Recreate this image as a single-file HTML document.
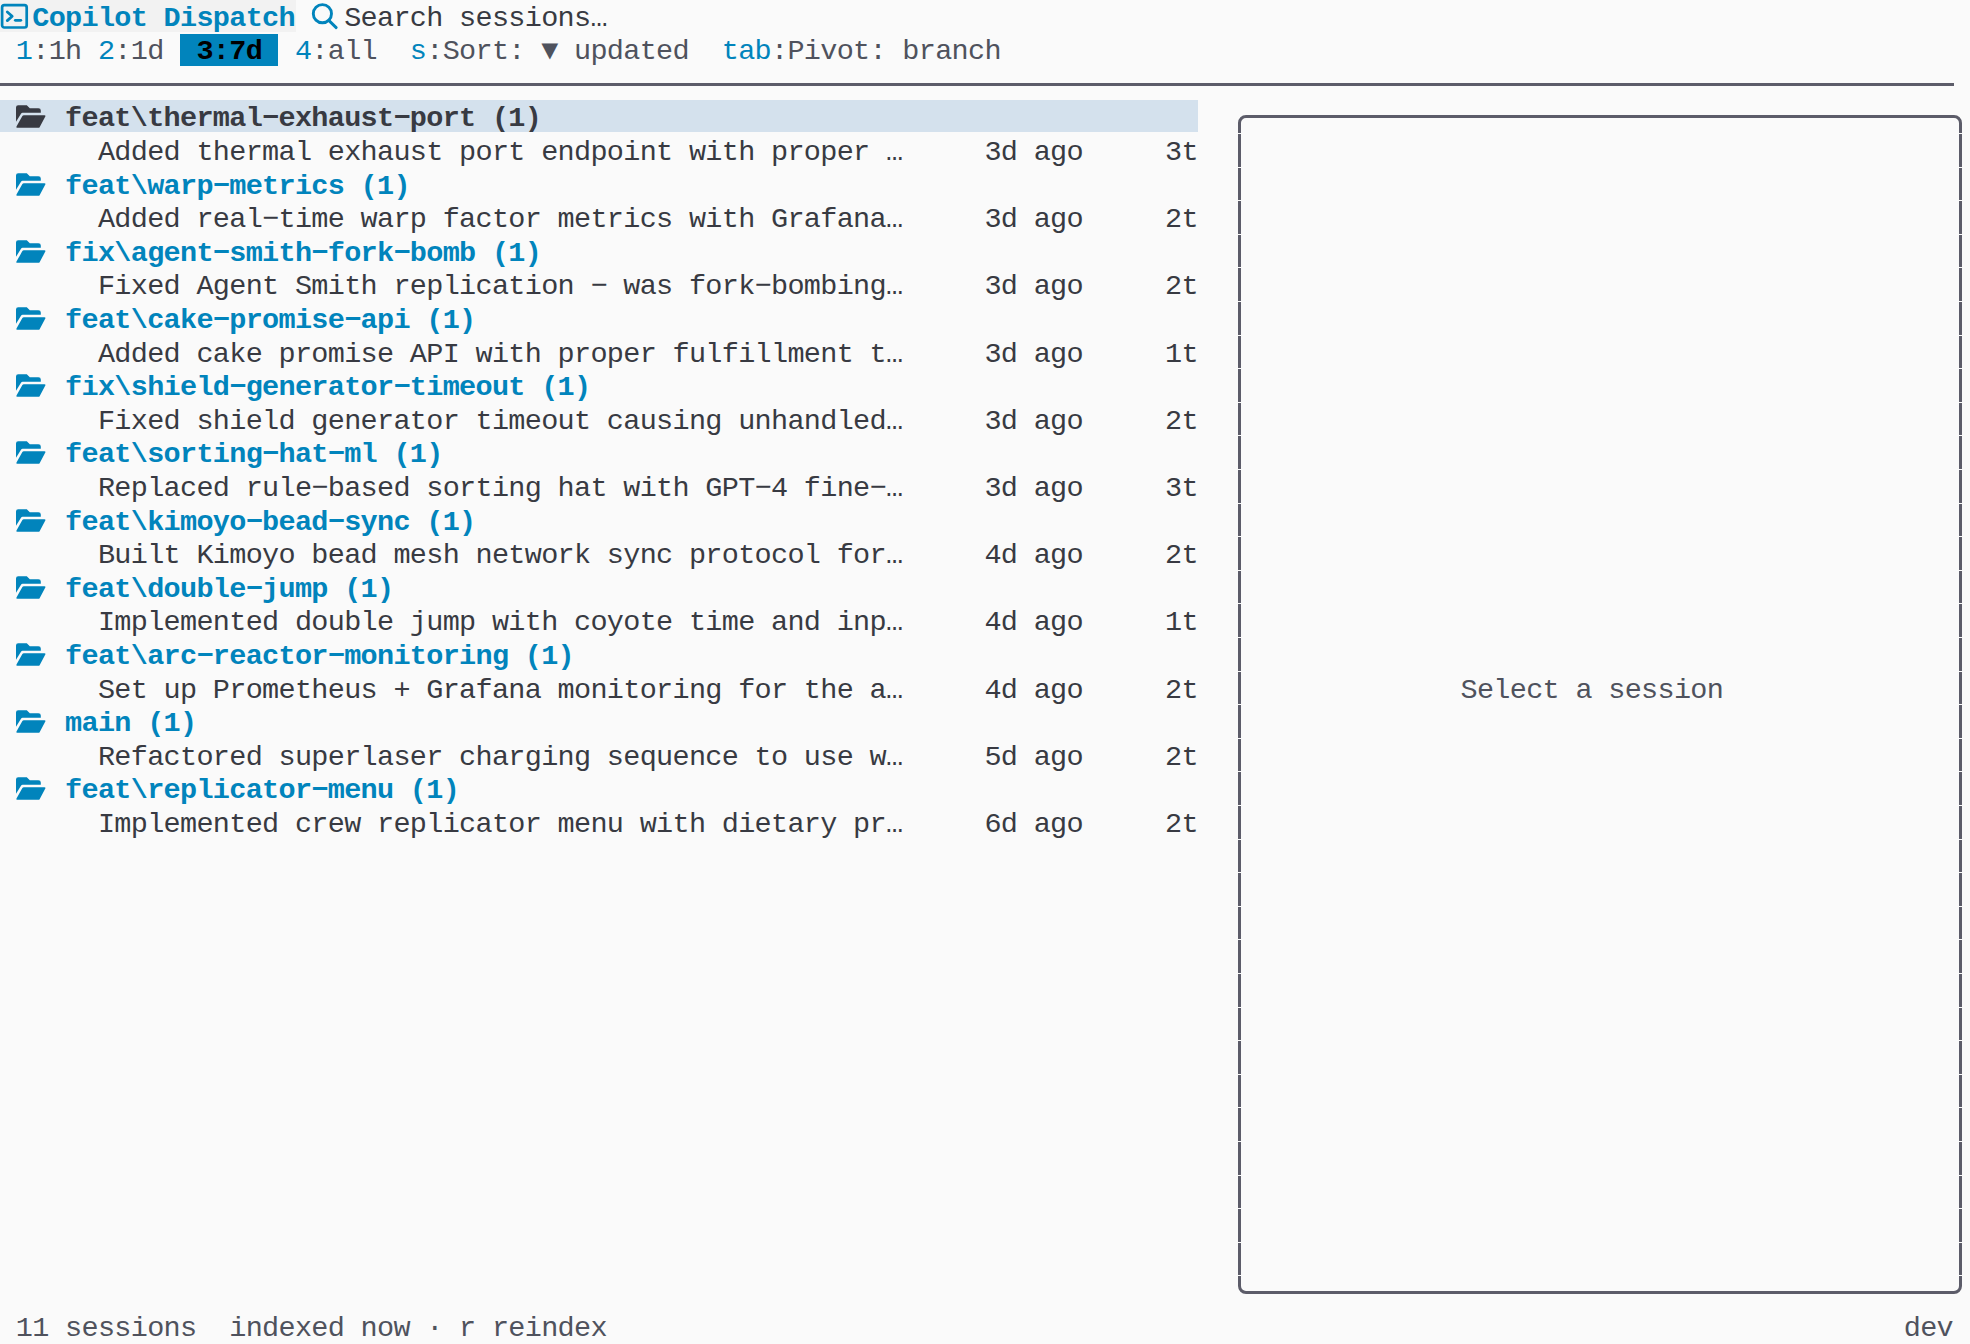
<!DOCTYPE html>
<html><head><meta charset="utf-8"><style>
html,body{margin:0;padding:0;}
body{width:1970px;height:1344px;overflow:hidden;background:#fafafa;position:relative;}
.t{position:absolute;white-space:pre;font-family:"Liberation Mono",monospace;font-size:28.5px;line-height:33.6px;height:33.6px;letter-spacing:-0.6861px;}
.r{position:absolute;}
</style></head><body>
<div class="r" style="left:0px;top:0px;width:296px;height:32px;background:#f2f2f2;"></div>
<svg class="r" style="left:0;top:0" width="34" height="34" viewBox="0 0 34 34">
<rect x="2.1" y="5.2" width="24.6" height="22.3" rx="2.2" fill="none" stroke="#0184bc" stroke-width="2.7"/>
<polyline points="7.3,12 12.2,16.2 7.3,20.6" fill="none" stroke="#0184bc" stroke-width="2.8" stroke-linecap="round" stroke-linejoin="round"/>
<line x1="15.3" y1="20.3" x2="20.8" y2="20.3" stroke="#0184bc" stroke-width="2.8" stroke-linecap="round"/>
</svg>
<div class="t" style="left:32.233px;top:1.50px;color:#0184bc;font-weight:bold;">Copilot Dispatch</div>
<svg class="r" style="left:300px;top:0" width="44" height="34" viewBox="300 0 44 34">
<circle cx="322.4" cy="13.7" r="9.1" fill="none" stroke="#0184bc" stroke-width="2.9"/>
<line x1="329" y1="20.6" x2="336.2" y2="27.6" stroke="#0184bc" stroke-width="2.9" stroke-linecap="round"/>
</svg>
<div class="t" style="left:344.150px;top:1.50px;color:#383a42;">Search sessions…</div>
<div class="r" style="left:180px;top:34px;width:98px;height:32px;background:#0184bc;"></div>
<div class="t" style="left:15.817px;top:35.10px;color:#0184bc;">1</div>
<div class="t" style="left:32.233px;top:35.10px;color:#4f525d;">:1h</div>
<div class="t" style="left:97.900px;top:35.10px;color:#0184bc;">2</div>
<div class="t" style="left:114.317px;top:35.10px;color:#4f525d;">:1d</div>
<div class="t" style="left:196.400px;top:35.10px;color:#000;font-weight:bold;">3:7d</div>
<div class="t" style="left:294.900px;top:35.10px;color:#0184bc;">4</div>
<div class="t" style="left:311.317px;top:35.10px;color:#4f525d;">:all</div>
<div class="t" style="left:409.817px;top:35.10px;color:#0184bc;">s</div>
<div class="t" style="left:426.233px;top:35.10px;color:#4f525d;">:Sort: ▼ updated</div>
<div class="t" style="left:721.733px;top:35.10px;color:#0184bc;">tab</div>
<div class="t" style="left:770.983px;top:35.10px;color:#4f525d;">:Pivot: branch</div>
<div class="r" style="left:0px;top:83px;width:1954px;height:3px;background:#5c5c69;"></div>
<div class="r" style="left:0px;top:100px;width:1198px;height:32px;background:#d4e1ed;"></div>
<svg class="r" style="left:0;top:101.30px" width="50" height="34" viewBox="0 0 50 34">
<path d="M16,6.4 Q16,4.2 18.2,4.2 L26.8,4.2 L29.8,7.2 L38.4,7.2 Q40.8,7.2 40.8,9.6 L40.8,11.8 L22.6,11.8 Q21.6,11.8 21,12.8 L16,20.8 Z" fill="#383a42"/>
<path d="M23.8,14.2 L44.4,14.2 Q45.9,14.2 45.3,15.6 L39.6,26.2 Q39.2,26.8 38.4,26.8 L17.2,26.8 Q15.9,26.8 16.5,25.6 L22.4,15.0 Q22.9,14.2 23.8,14.2 Z" fill="#383a42"/>
</svg>
<div class="t" style="left:65.067px;top:102.30px;color:#383a42;font-weight:bold;">feat\thermal−exhaust−port (1)</div>
<div class="t" style="left:97.900px;top:135.90px;color:#383a42;">Added thermal exhaust port endpoint with proper …</div>
<div class="t" style="left:984.400px;top:135.90px;color:#383a42;">3d ago</div>
<div class="t" style="left:1164.983px;top:135.90px;color:#383a42;">3t</div>
<svg class="r" style="left:0;top:168.50px" width="50" height="34" viewBox="0 0 50 34">
<path d="M16,6.4 Q16,4.2 18.2,4.2 L26.8,4.2 L29.8,7.2 L38.4,7.2 Q40.8,7.2 40.8,9.6 L40.8,11.8 L22.6,11.8 Q21.6,11.8 21,12.8 L16,20.8 Z" fill="#0184bc"/>
<path d="M23.8,14.2 L44.4,14.2 Q45.9,14.2 45.3,15.6 L39.6,26.2 Q39.2,26.8 38.4,26.8 L17.2,26.8 Q15.9,26.8 16.5,25.6 L22.4,15.0 Q22.9,14.2 23.8,14.2 Z" fill="#0184bc"/>
</svg>
<div class="t" style="left:65.067px;top:169.50px;color:#0184bc;font-weight:bold;">feat\warp−metrics (1)</div>
<div class="t" style="left:97.900px;top:203.10px;color:#383a42;">Added real−time warp factor metrics with Grafana…</div>
<div class="t" style="left:984.400px;top:203.10px;color:#383a42;">3d ago</div>
<div class="t" style="left:1164.983px;top:203.10px;color:#383a42;">2t</div>
<svg class="r" style="left:0;top:235.70px" width="50" height="34" viewBox="0 0 50 34">
<path d="M16,6.4 Q16,4.2 18.2,4.2 L26.8,4.2 L29.8,7.2 L38.4,7.2 Q40.8,7.2 40.8,9.6 L40.8,11.8 L22.6,11.8 Q21.6,11.8 21,12.8 L16,20.8 Z" fill="#0184bc"/>
<path d="M23.8,14.2 L44.4,14.2 Q45.9,14.2 45.3,15.6 L39.6,26.2 Q39.2,26.8 38.4,26.8 L17.2,26.8 Q15.9,26.8 16.5,25.6 L22.4,15.0 Q22.9,14.2 23.8,14.2 Z" fill="#0184bc"/>
</svg>
<div class="t" style="left:65.067px;top:236.70px;color:#0184bc;font-weight:bold;">fix\agent−smith−fork−bomb (1)</div>
<div class="t" style="left:97.900px;top:270.30px;color:#383a42;">Fixed Agent Smith replication − was fork−bombing…</div>
<div class="t" style="left:984.400px;top:270.30px;color:#383a42;">3d ago</div>
<div class="t" style="left:1164.983px;top:270.30px;color:#383a42;">2t</div>
<svg class="r" style="left:0;top:302.90px" width="50" height="34" viewBox="0 0 50 34">
<path d="M16,6.4 Q16,4.2 18.2,4.2 L26.8,4.2 L29.8,7.2 L38.4,7.2 Q40.8,7.2 40.8,9.6 L40.8,11.8 L22.6,11.8 Q21.6,11.8 21,12.8 L16,20.8 Z" fill="#0184bc"/>
<path d="M23.8,14.2 L44.4,14.2 Q45.9,14.2 45.3,15.6 L39.6,26.2 Q39.2,26.8 38.4,26.8 L17.2,26.8 Q15.9,26.8 16.5,25.6 L22.4,15.0 Q22.9,14.2 23.8,14.2 Z" fill="#0184bc"/>
</svg>
<div class="t" style="left:65.067px;top:303.90px;color:#0184bc;font-weight:bold;">feat\cake−promise−api (1)</div>
<div class="t" style="left:97.900px;top:337.50px;color:#383a42;">Added cake promise API with proper fulfillment t…</div>
<div class="t" style="left:984.400px;top:337.50px;color:#383a42;">3d ago</div>
<div class="t" style="left:1164.983px;top:337.50px;color:#383a42;">1t</div>
<svg class="r" style="left:0;top:370.10px" width="50" height="34" viewBox="0 0 50 34">
<path d="M16,6.4 Q16,4.2 18.2,4.2 L26.8,4.2 L29.8,7.2 L38.4,7.2 Q40.8,7.2 40.8,9.6 L40.8,11.8 L22.6,11.8 Q21.6,11.8 21,12.8 L16,20.8 Z" fill="#0184bc"/>
<path d="M23.8,14.2 L44.4,14.2 Q45.9,14.2 45.3,15.6 L39.6,26.2 Q39.2,26.8 38.4,26.8 L17.2,26.8 Q15.9,26.8 16.5,25.6 L22.4,15.0 Q22.9,14.2 23.8,14.2 Z" fill="#0184bc"/>
</svg>
<div class="t" style="left:65.067px;top:371.10px;color:#0184bc;font-weight:bold;">fix\shield−generator−timeout (1)</div>
<div class="t" style="left:97.900px;top:404.70px;color:#383a42;">Fixed shield generator timeout causing unhandled…</div>
<div class="t" style="left:984.400px;top:404.70px;color:#383a42;">3d ago</div>
<div class="t" style="left:1164.983px;top:404.70px;color:#383a42;">2t</div>
<svg class="r" style="left:0;top:437.30px" width="50" height="34" viewBox="0 0 50 34">
<path d="M16,6.4 Q16,4.2 18.2,4.2 L26.8,4.2 L29.8,7.2 L38.4,7.2 Q40.8,7.2 40.8,9.6 L40.8,11.8 L22.6,11.8 Q21.6,11.8 21,12.8 L16,20.8 Z" fill="#0184bc"/>
<path d="M23.8,14.2 L44.4,14.2 Q45.9,14.2 45.3,15.6 L39.6,26.2 Q39.2,26.8 38.4,26.8 L17.2,26.8 Q15.9,26.8 16.5,25.6 L22.4,15.0 Q22.9,14.2 23.8,14.2 Z" fill="#0184bc"/>
</svg>
<div class="t" style="left:65.067px;top:438.30px;color:#0184bc;font-weight:bold;">feat\sorting−hat−ml (1)</div>
<div class="t" style="left:97.900px;top:471.90px;color:#383a42;">Replaced rule−based sorting hat with GPT−4 fine−…</div>
<div class="t" style="left:984.400px;top:471.90px;color:#383a42;">3d ago</div>
<div class="t" style="left:1164.983px;top:471.90px;color:#383a42;">3t</div>
<svg class="r" style="left:0;top:504.50px" width="50" height="34" viewBox="0 0 50 34">
<path d="M16,6.4 Q16,4.2 18.2,4.2 L26.8,4.2 L29.8,7.2 L38.4,7.2 Q40.8,7.2 40.8,9.6 L40.8,11.8 L22.6,11.8 Q21.6,11.8 21,12.8 L16,20.8 Z" fill="#0184bc"/>
<path d="M23.8,14.2 L44.4,14.2 Q45.9,14.2 45.3,15.6 L39.6,26.2 Q39.2,26.8 38.4,26.8 L17.2,26.8 Q15.9,26.8 16.5,25.6 L22.4,15.0 Q22.9,14.2 23.8,14.2 Z" fill="#0184bc"/>
</svg>
<div class="t" style="left:65.067px;top:505.50px;color:#0184bc;font-weight:bold;">feat\kimoyo−bead−sync (1)</div>
<div class="t" style="left:97.900px;top:539.10px;color:#383a42;">Built Kimoyo bead mesh network sync protocol for…</div>
<div class="t" style="left:984.400px;top:539.10px;color:#383a42;">4d ago</div>
<div class="t" style="left:1164.983px;top:539.10px;color:#383a42;">2t</div>
<svg class="r" style="left:0;top:571.70px" width="50" height="34" viewBox="0 0 50 34">
<path d="M16,6.4 Q16,4.2 18.2,4.2 L26.8,4.2 L29.8,7.2 L38.4,7.2 Q40.8,7.2 40.8,9.6 L40.8,11.8 L22.6,11.8 Q21.6,11.8 21,12.8 L16,20.8 Z" fill="#0184bc"/>
<path d="M23.8,14.2 L44.4,14.2 Q45.9,14.2 45.3,15.6 L39.6,26.2 Q39.2,26.8 38.4,26.8 L17.2,26.8 Q15.9,26.8 16.5,25.6 L22.4,15.0 Q22.9,14.2 23.8,14.2 Z" fill="#0184bc"/>
</svg>
<div class="t" style="left:65.067px;top:572.70px;color:#0184bc;font-weight:bold;">feat\double−jump (1)</div>
<div class="t" style="left:97.900px;top:606.30px;color:#383a42;">Implemented double jump with coyote time and inp…</div>
<div class="t" style="left:984.400px;top:606.30px;color:#383a42;">4d ago</div>
<div class="t" style="left:1164.983px;top:606.30px;color:#383a42;">1t</div>
<svg class="r" style="left:0;top:638.90px" width="50" height="34" viewBox="0 0 50 34">
<path d="M16,6.4 Q16,4.2 18.2,4.2 L26.8,4.2 L29.8,7.2 L38.4,7.2 Q40.8,7.2 40.8,9.6 L40.8,11.8 L22.6,11.8 Q21.6,11.8 21,12.8 L16,20.8 Z" fill="#0184bc"/>
<path d="M23.8,14.2 L44.4,14.2 Q45.9,14.2 45.3,15.6 L39.6,26.2 Q39.2,26.8 38.4,26.8 L17.2,26.8 Q15.9,26.8 16.5,25.6 L22.4,15.0 Q22.9,14.2 23.8,14.2 Z" fill="#0184bc"/>
</svg>
<div class="t" style="left:65.067px;top:639.90px;color:#0184bc;font-weight:bold;">feat\arc−reactor−monitoring (1)</div>
<div class="t" style="left:97.900px;top:673.50px;color:#383a42;">Set up Prometheus + Grafana monitoring for the a…</div>
<div class="t" style="left:984.400px;top:673.50px;color:#383a42;">4d ago</div>
<div class="t" style="left:1164.983px;top:673.50px;color:#383a42;">2t</div>
<svg class="r" style="left:0;top:706.10px" width="50" height="34" viewBox="0 0 50 34">
<path d="M16,6.4 Q16,4.2 18.2,4.2 L26.8,4.2 L29.8,7.2 L38.4,7.2 Q40.8,7.2 40.8,9.6 L40.8,11.8 L22.6,11.8 Q21.6,11.8 21,12.8 L16,20.8 Z" fill="#0184bc"/>
<path d="M23.8,14.2 L44.4,14.2 Q45.9,14.2 45.3,15.6 L39.6,26.2 Q39.2,26.8 38.4,26.8 L17.2,26.8 Q15.9,26.8 16.5,25.6 L22.4,15.0 Q22.9,14.2 23.8,14.2 Z" fill="#0184bc"/>
</svg>
<div class="t" style="left:65.067px;top:707.10px;color:#0184bc;font-weight:bold;">main (1)</div>
<div class="t" style="left:97.900px;top:740.70px;color:#383a42;">Refactored superlaser charging sequence to use w…</div>
<div class="t" style="left:984.400px;top:740.70px;color:#383a42;">5d ago</div>
<div class="t" style="left:1164.983px;top:740.70px;color:#383a42;">2t</div>
<svg class="r" style="left:0;top:773.30px" width="50" height="34" viewBox="0 0 50 34">
<path d="M16,6.4 Q16,4.2 18.2,4.2 L26.8,4.2 L29.8,7.2 L38.4,7.2 Q40.8,7.2 40.8,9.6 L40.8,11.8 L22.6,11.8 Q21.6,11.8 21,12.8 L16,20.8 Z" fill="#0184bc"/>
<path d="M23.8,14.2 L44.4,14.2 Q45.9,14.2 45.3,15.6 L39.6,26.2 Q39.2,26.8 38.4,26.8 L17.2,26.8 Q15.9,26.8 16.5,25.6 L22.4,15.0 Q22.9,14.2 23.8,14.2 Z" fill="#0184bc"/>
</svg>
<div class="t" style="left:65.067px;top:774.30px;color:#0184bc;font-weight:bold;">feat\replicator−menu (1)</div>
<div class="t" style="left:97.900px;top:807.90px;color:#383a42;">Implemented crew replicator menu with dietary pr…</div>
<div class="t" style="left:984.400px;top:807.90px;color:#383a42;">6d ago</div>
<div class="t" style="left:1164.983px;top:807.90px;color:#383a42;">2t</div>
<div class="r" style="left:1237.5px;top:115px;width:724.5px;height:1179px;box-sizing:border-box;border:3px solid #5c5c69;border-radius:8px"></div>
<div class="r" style="left:1236px;top:133px;width:7px;height:1px;background:#fafafa;"></div>
<div class="r" style="left:1957px;top:133px;width:7px;height:1px;background:#fafafa;"></div>
<div class="r" style="left:1236px;top:167px;width:7px;height:1px;background:#fafafa;"></div>
<div class="r" style="left:1957px;top:167px;width:7px;height:1px;background:#fafafa;"></div>
<div class="r" style="left:1236px;top:200px;width:7px;height:1px;background:#fafafa;"></div>
<div class="r" style="left:1957px;top:200px;width:7px;height:1px;background:#fafafa;"></div>
<div class="r" style="left:1236px;top:234px;width:7px;height:1px;background:#fafafa;"></div>
<div class="r" style="left:1957px;top:234px;width:7px;height:1px;background:#fafafa;"></div>
<div class="r" style="left:1236px;top:267px;width:7px;height:1px;background:#fafafa;"></div>
<div class="r" style="left:1957px;top:267px;width:7px;height:1px;background:#fafafa;"></div>
<div class="r" style="left:1236px;top:301px;width:7px;height:1px;background:#fafafa;"></div>
<div class="r" style="left:1957px;top:301px;width:7px;height:1px;background:#fafafa;"></div>
<div class="r" style="left:1236px;top:335px;width:7px;height:1px;background:#fafafa;"></div>
<div class="r" style="left:1957px;top:335px;width:7px;height:1px;background:#fafafa;"></div>
<div class="r" style="left:1236px;top:368px;width:7px;height:1px;background:#fafafa;"></div>
<div class="r" style="left:1957px;top:368px;width:7px;height:1px;background:#fafafa;"></div>
<div class="r" style="left:1236px;top:402px;width:7px;height:1px;background:#fafafa;"></div>
<div class="r" style="left:1957px;top:402px;width:7px;height:1px;background:#fafafa;"></div>
<div class="r" style="left:1236px;top:435px;width:7px;height:1px;background:#fafafa;"></div>
<div class="r" style="left:1957px;top:435px;width:7px;height:1px;background:#fafafa;"></div>
<div class="r" style="left:1236px;top:469px;width:7px;height:1px;background:#fafafa;"></div>
<div class="r" style="left:1957px;top:469px;width:7px;height:1px;background:#fafafa;"></div>
<div class="r" style="left:1236px;top:503px;width:7px;height:1px;background:#fafafa;"></div>
<div class="r" style="left:1957px;top:503px;width:7px;height:1px;background:#fafafa;"></div>
<div class="r" style="left:1236px;top:536px;width:7px;height:1px;background:#fafafa;"></div>
<div class="r" style="left:1957px;top:536px;width:7px;height:1px;background:#fafafa;"></div>
<div class="r" style="left:1236px;top:570px;width:7px;height:1px;background:#fafafa;"></div>
<div class="r" style="left:1957px;top:570px;width:7px;height:1px;background:#fafafa;"></div>
<div class="r" style="left:1236px;top:603px;width:7px;height:1px;background:#fafafa;"></div>
<div class="r" style="left:1957px;top:603px;width:7px;height:1px;background:#fafafa;"></div>
<div class="r" style="left:1236px;top:637px;width:7px;height:1px;background:#fafafa;"></div>
<div class="r" style="left:1957px;top:637px;width:7px;height:1px;background:#fafafa;"></div>
<div class="r" style="left:1236px;top:671px;width:7px;height:1px;background:#fafafa;"></div>
<div class="r" style="left:1957px;top:671px;width:7px;height:1px;background:#fafafa;"></div>
<div class="r" style="left:1236px;top:704px;width:7px;height:1px;background:#fafafa;"></div>
<div class="r" style="left:1957px;top:704px;width:7px;height:1px;background:#fafafa;"></div>
<div class="r" style="left:1236px;top:738px;width:7px;height:1px;background:#fafafa;"></div>
<div class="r" style="left:1957px;top:738px;width:7px;height:1px;background:#fafafa;"></div>
<div class="r" style="left:1236px;top:771px;width:7px;height:1px;background:#fafafa;"></div>
<div class="r" style="left:1957px;top:771px;width:7px;height:1px;background:#fafafa;"></div>
<div class="r" style="left:1236px;top:805px;width:7px;height:1px;background:#fafafa;"></div>
<div class="r" style="left:1957px;top:805px;width:7px;height:1px;background:#fafafa;"></div>
<div class="r" style="left:1236px;top:839px;width:7px;height:1px;background:#fafafa;"></div>
<div class="r" style="left:1957px;top:839px;width:7px;height:1px;background:#fafafa;"></div>
<div class="r" style="left:1236px;top:872px;width:7px;height:1px;background:#fafafa;"></div>
<div class="r" style="left:1957px;top:872px;width:7px;height:1px;background:#fafafa;"></div>
<div class="r" style="left:1236px;top:906px;width:7px;height:1px;background:#fafafa;"></div>
<div class="r" style="left:1957px;top:906px;width:7px;height:1px;background:#fafafa;"></div>
<div class="r" style="left:1236px;top:939px;width:7px;height:1px;background:#fafafa;"></div>
<div class="r" style="left:1957px;top:939px;width:7px;height:1px;background:#fafafa;"></div>
<div class="r" style="left:1236px;top:973px;width:7px;height:1px;background:#fafafa;"></div>
<div class="r" style="left:1957px;top:973px;width:7px;height:1px;background:#fafafa;"></div>
<div class="r" style="left:1236px;top:1007px;width:7px;height:1px;background:#fafafa;"></div>
<div class="r" style="left:1957px;top:1007px;width:7px;height:1px;background:#fafafa;"></div>
<div class="r" style="left:1236px;top:1040px;width:7px;height:1px;background:#fafafa;"></div>
<div class="r" style="left:1957px;top:1040px;width:7px;height:1px;background:#fafafa;"></div>
<div class="r" style="left:1236px;top:1074px;width:7px;height:1px;background:#fafafa;"></div>
<div class="r" style="left:1957px;top:1074px;width:7px;height:1px;background:#fafafa;"></div>
<div class="r" style="left:1236px;top:1107px;width:7px;height:1px;background:#fafafa;"></div>
<div class="r" style="left:1957px;top:1107px;width:7px;height:1px;background:#fafafa;"></div>
<div class="r" style="left:1236px;top:1141px;width:7px;height:1px;background:#fafafa;"></div>
<div class="r" style="left:1957px;top:1141px;width:7px;height:1px;background:#fafafa;"></div>
<div class="r" style="left:1236px;top:1175px;width:7px;height:1px;background:#fafafa;"></div>
<div class="r" style="left:1957px;top:1175px;width:7px;height:1px;background:#fafafa;"></div>
<div class="r" style="left:1236px;top:1208px;width:7px;height:1px;background:#fafafa;"></div>
<div class="r" style="left:1957px;top:1208px;width:7px;height:1px;background:#fafafa;"></div>
<div class="r" style="left:1236px;top:1242px;width:7px;height:1px;background:#fafafa;"></div>
<div class="r" style="left:1957px;top:1242px;width:7px;height:1px;background:#fafafa;"></div>
<div class="r" style="left:1236px;top:1275px;width:7px;height:1px;background:#fafafa;"></div>
<div class="r" style="left:1957px;top:1275px;width:7px;height:1px;background:#fafafa;"></div>
<div class="t" style="left:1460.483px;top:673.50px;color:#4f525d;">Select a session</div>
<div class="t" style="left:15.817px;top:1311.90px;color:#4f525d;">11 sessions  indexed now · r reindex</div>
<div class="t" style="left:1903.733px;top:1311.90px;color:#4f525d;">dev</div>
</body></html>
